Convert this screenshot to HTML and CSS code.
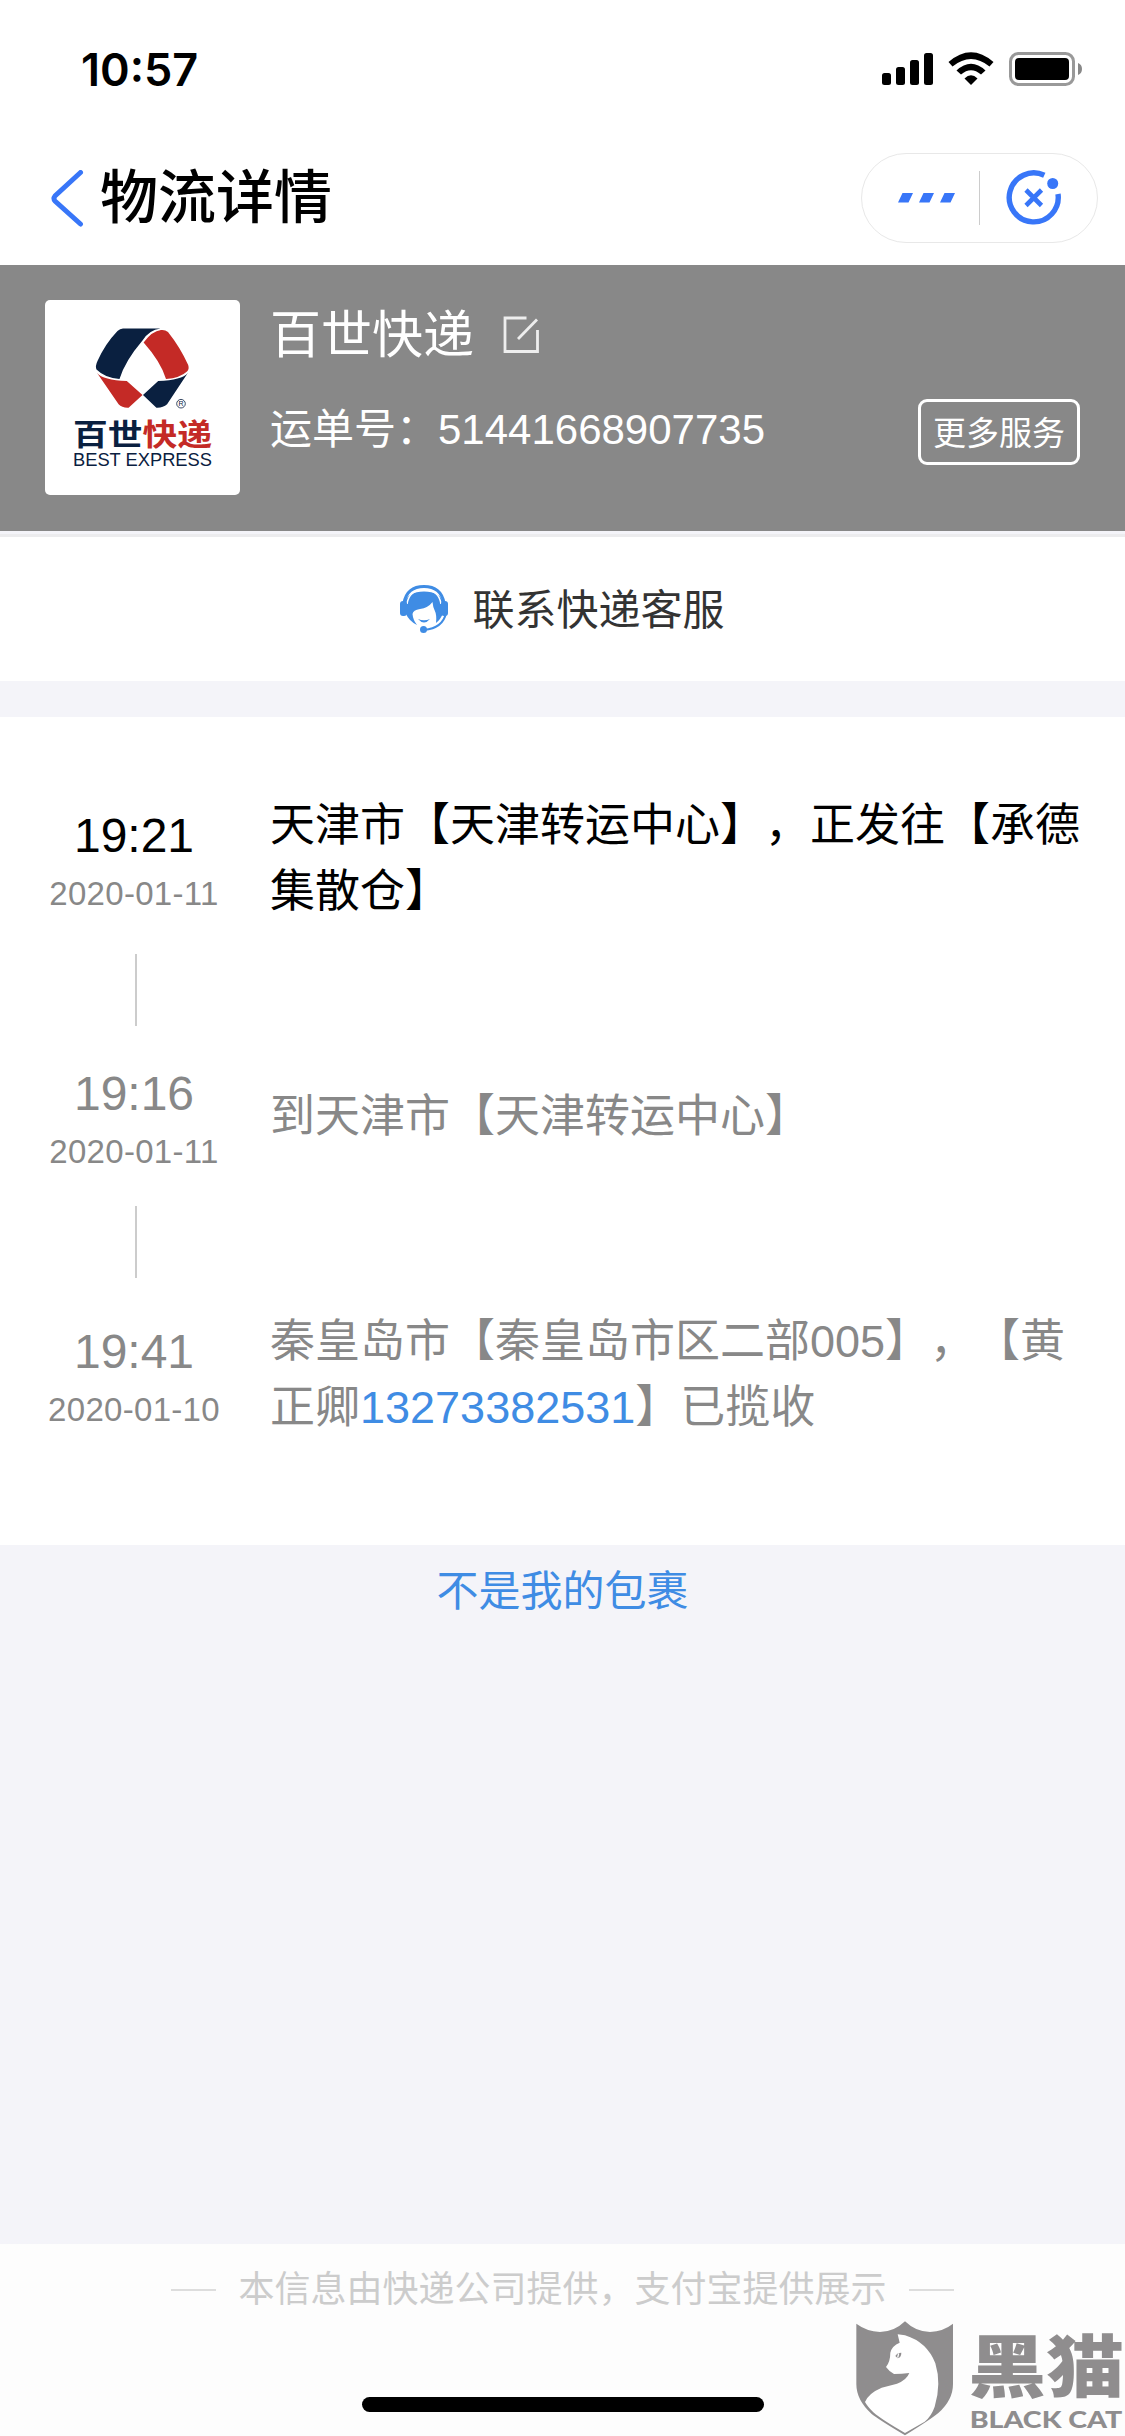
FILE: index.html
```html
<!DOCTYPE html>
<html lang="zh-CN">
<head>
    <meta charset="UTF-8">
    <title>物流详情</title>
    <link rel="stylesheet" href="styles.css">
</head>
<body>
    <!-- 状态栏 -->
    <div class="status-bar">
        <span class="status-time">10:57</span>
        <svg class="status-icons" width="202" height="36" viewBox="0 0 202 36">
            <rect x="1" y="21" width="9" height="12" rx="2.5"/>
            <rect x="15" y="15" width="9" height="18" rx="2.5"/>
            <rect x="29" y="8" width="9" height="25" rx="2.5"/>
            <rect x="43" y="1" width="9" height="32" rx="2.5"/>
            <path d="M67.5 10Q90-9.500 112.500 10L108.500 14.500Q90-.5 71.500 14.500Z"/>
            <path d="M75.500 18.500Q90 5 104.500 18.500L100 22.500Q90 14 80 22.500Z"/>
            <path d="M83.500 26.500Q90 20 96.500 26.500L90 33Z"/>
            <rect x="129.500" y="1.500" width="63" height="31" rx="8" fill="none" stroke="#999" stroke-width="3"/>
            <rect x="134" y="6" width="54" height="22" rx="4"/>
            <path d="M197 11Q201 12.500 201 17Q201 21.500 197 23Z" fill="#888"/>
        </svg>
    </div>

    <!-- 标题栏 -->
    <div class="nav-bar">
        <svg class="back-icon" width="33" height="58" viewBox="0 0 33 58">
            <path d="M29.500 2.500L4 26Q2 28.500 4 31L29.500 54" fill="none" stroke="#3876f8" stroke-width="5" stroke-linecap="round"/>
        </svg>
        <h1 class="nav-title">物流详情</h1>
        <div class="capsule">
            <svg class="more-icon" width="58" height="10" viewBox="0 0 58 10">
                <path d="M4.500 0h10.500l-4.500 9.500H0zM25.500 0h10.500l-4.500 9.500H21zM46.500 0h10.500l-4.500 9.500H42z" fill="#3876f8"/>
            </svg>
            <div class="capsule-line"></div>
            <svg class="close-icon" width="56" height="56" viewBox="0 0 56 56">
                <path d="M38.300 5.300A24.500 24.500 0 1 0 52 24" fill="none" stroke="#3876f8" stroke-width="5.400"/>
                <circle cx="46.700" cy="13.500" r="5.500" fill="#3876f8"/>
                <path d="M20 20l15.500 15.500M35.500 20L20 35.500" stroke="#3876f8" stroke-width="4.600"/>
            </svg>
        </div>
    </div>

    <!-- 快递公司 -->
    <div class="company">
        <svg class="company-logo" width="195" height="195" viewBox="0 0 195 195">
            <path d="M78 28.500H115.500Q104 30 97.500 40.500Q80 61 74.500 79Q60 78 51.500 69.500Q50 66 52.500 61Q60 44 72.500 31Q75 28.500 78 28.500Z" fill="#0a2040"/>
            <path d="M98.600 42.500Q107 31 116 30Q120 29.500 123 32Q135 47 143.200 65Q144.500 69 142 71.500Q135 78 121 79Q116 62 98.600 42.500Z" fill="#c42a26"/>
            <path d="M52.100 73Q58 80 81.800 81L97.500 95L83.600 107.700Q77 108 73.600 104.300Z" fill="#c42a26"/>
            <path d="M142.800 73Q137 80 113.200 81L98 95L111.400 107.700Q118 108 122.100 104.300Z" fill="#0a2040"/>
            <circle cx="136" cy="103.700" r="4.300" fill="none" stroke="#0a2040" stroke-width=".8"/>
            <text class="logo-mark" x="133.600" y="106.400">R</text>
            <text class="logo-cn" x="28" y="145" textLength="139" lengthAdjust="spacingAndGlyphs"><tspan fill="#0a2040">百世</tspan><tspan fill="#c42a26">快递</tspan></text>
            <text class="logo-en" x="28" y="166" textLength="139" lengthAdjust="spacingAndGlyphs">BEST EXPRESS</text>
        </svg>
        <div class="company-info">
            <div class="company-name">
                <span>百世快递</span>
                <svg width="38" height="38" viewBox="0 0 38 38">
                    <path d="M23.500 2H2V35.500H34.500V14" fill="none" stroke="#eee" stroke-width="2.800"/>
                    <path d="M34 3.500L15 23" stroke="#eee" stroke-width="2.800"/>
                </svg>
            </div>
            <div class="waybill">运单号：51441668907735</div>
        </div>
        <button class="btn-more">更多服务</button>
    </div>

    <!-- 客服 -->
    <div class="service">
        <svg width="48" height="48" viewBox="0 0 48 48">
            <path d="M4 18Q7 1.500 24 1.500Q41 1.500 44 18" fill="none" stroke="#3f8ce4" stroke-width="3"/>
            <path d="M5 17Q8 6.500 24 6.500Q40 6.500 43 17V28Q41 34 36 38Q37 30 34.500 25Q33 22 32.500 17Q28 23 20 24Q13 25 12.500 29Q13 35 17 40Q9 36 6 29Z" fill="#3f8ce4"/>
            <path d="M7 19Q9 5 24 4.500Q39 5 41 19" fill="none" stroke="#fff" stroke-width="1.600"/>
            <rect x="0" y="16" width="7" height="15" rx="3" fill="#3f8ce4"/>
            <rect x="41" y="16" width="7" height="15" rx="3" fill="#3f8ce4"/>
            <path d="M18 34Q24 36.500 30 34Q24 41 18 34Z" fill="#3f8ce4"/>
            <path d="M46 28Q43 43 24 45" fill="none" stroke="#3f8ce4" stroke-width="2"/>
            <circle cx="23.500" cy="44.500" r="3.500" fill="#3f8ce4"/>
        </svg>
        <span class="service-text">联系快递客服</span>
    </div>

    <!-- 物流轨迹 -->
    <div class="track-list">
        <div class="track-item active">
            <div class="track-date">
                <div class="time">19:21</div>
                <div class="date">2020-01-11</div>
            </div>
            <div class="track-text">天津市【天津转运中心】，正发往【承德集散仓】</div>
        </div>
        <div class="track-line"></div>
        <div class="track-item">
            <div class="track-date">
                <div class="time">19:16</div>
                <div class="date">2020-01-11</div>
            </div>
            <div class="track-text">到天津市【天津转运中心】</div>
        </div>
        <div class="track-line second"></div>
        <div class="track-item">
            <div class="track-date">
                <div class="time">19:41</div>
                <div class="date">2020-01-10</div>
            </div>
            <div class="track-text">
                <div>秦皇岛市【秦皇岛市区二部005】，【黄</div>
                <div class="track-row"><span>正卿</span><a class="phone">13273382531</a><span>】已揽收</span></div>
            </div>
        </div>
    </div>

    <a class="not-mine">不是我的包裹</a>

    <div class="footer">
        <div class="footer-text">本信息由快递公司提供，支付宝提供展示</div>
        <div class="home-bar"></div>
    </div>

    <!-- 右下角水印 -->
    <svg class="watermark" width="270" height="116" viewBox="90 90 810 348">
        <path d="M94 101Q125 124 165 126Q207 126 240 94Q273 126 315 126Q355 124 384 101V282Q384 330 340 369Q320 386 240 436Q160 388 140 372Q94 330 94 282Z" fill="#8f8d8e"/>
        <path d="M218 133L240 136Q306 156 331 220Q350 282 329 350Q319 379 299 395L240 429Q170 389 145 367Q127 349 120 336Q130 310 170 293L216 281Q245 270 253 249Q230 252 207 252Q193 245 183 231Q196 214 196 188Q201 167 224 158Z" fill="#fff"/>
        <path d="M211 198Q216 188 229 188Q229 202 218 205Z" fill="#8f8d8e"/>
        <path d="M221 190L218 203" stroke="#fff" stroke-width="4"/>
        <text class="mark-cn" x="430" y="305" textLength="468" lengthAdjust="spacingAndGlyphs">黑猫</text>
        <text class="mark-en" x="434" y="415" textLength="458" lengthAdjust="spacingAndGlyphs">BLACK CAT</text>
    </svg>
</body>
</html>
```
FILE: styles.css
```css
body {
    font-family: "Liberation Sans", "Noto Sans CJK SC", sans-serif;
    margin: 0;
    width: 1125px;
    height: 2436px;
    background-color: #f4f4f9;
    display: flex;
    flex-direction: column;
    position: relative;
    overflow: hidden;
    text-spacing-trim: space-all;
}

/* 状态栏 */
.status-bar {
    height: 132px;
    background-color: #fff;
    display: flex;
    justify-content: space-between;
    align-items: flex-start;
    padding: 0 42px 0 81px;
    box-sizing: border-box;
}

.status-time {
    font-family: Inter, sans-serif;
    font-size: 45px;
    font-weight: 600;
    line-height: 54px;
    margin-top: 43px;
}

.status-icons {
    margin-top: 52px;
}

/* 标题栏 */
.nav-bar {
    height: 133px;
    background-color: #fff;
    display: flex;
    align-items: center;
    padding: 0 27px 0 51px;
    box-sizing: border-box;
}

.nav-title {
    flex: 1;
    margin: 0 0 2px 16px;
    font-size: 58px;
    font-weight: 500;
    line-height: 80px;
}

.capsule {
    width: 237px;
    height: 90px;
    margin-bottom: 2px;
    border: 1px solid #e8e8e8;
    border-radius: 45px;
    box-sizing: border-box;
    display: flex;
    align-items: center;
}

.more-icon {
    margin-left: 36px;
}

.capsule-line {
    width: 1px;
    height: 54px;
    background-color: #ccc;
    margin: 0 26px 0 23px;
}

/* 快递公司 */
.company {
    height: 266px;
    background-color: #888;
    color: #fff;
    display: flex;
    align-items: flex-start;
    padding: 35px 45px 0;
    box-sizing: border-box;
}

.company-logo {
    background-color: #fff;
    border-radius: 5px;
}

.logo-mark {
    font-size: 7px;
    fill: #0a2040;
}

.logo-cn {
    font-size: 30px;
    font-weight: bold;
}

.logo-en {
    font-size: 17.5px;
    fill: #0a2040;
}

.company-info {
    flex: 1;
    margin-left: 30px;
}

.company-name {
    display: flex;
    align-items: center;
    gap: 29px;
    font-size: 51px;
    line-height: 66px;
}

.company-name span {
    padding-top: 3px;
}

.waybill {
    font-size: 42px;
    line-height: 60px;
    margin-top: 31px;
}

.btn-more {
    width: 162px;
    height: 66px;
    margin-top: 99px;
    padding: 0 0 2px;
    border: 3px solid #fff;
    border-radius: 9px;
    background: none;
    color: #fff;
    font-family: inherit;
    font-size: 33px;
}

/* 客服 */
.service {
    height: 144px;
    background-color: #fff;
    border-top: 3px solid #ececee;
    margin-top: 3px;
    display: flex;
    justify-content: center;
    align-items: center;
    gap: 24px;
    font-size: 42px;
    color: #333;
}

.service-text {
    padding-bottom: 5px;
}

/* 物流轨迹 */
.track-list {
    height: 828px;
    margin-top: 36px;
    padding: 76px 45px 0;
    background-color: #fff;
    box-sizing: border-box;
    color: #888;
}

.track-item {
    height: 132px;
    display: flex;
    align-items: center;
}

.track-item.active .time,
.track-item.active .track-text {
    color: #000;
}

.track-date {
    width: 178px;
    margin-right: 47px;
    padding-top: 2px;
    text-align: center;
}

.time {
    font-size: 48px;
    line-height: 60px;
}

.date {
    font-size: 33px;
    line-height: 40px;
    margin-top: 8px;
    letter-spacing: 0.3px;
}

.track-text {
    width: 810px;
    font-size: 45px;
    line-height: 66px;
}

.track-row {
    display: flex;
}

.track-line {
    width: 2px;
    height: 72px;
    margin: 29px 0 25px 90px;
    background-color: #ccc;
}

.track-line.second {
    margin: 23px 0 31px 90px;
}

.phone,
.not-mine {
    color: #3f8ce4;
}

.not-mine {
    text-align: center;
    font-size: 42px;
    line-height: 60px;
    margin-top: 17px;
}

/* 底部 */
.footer {
    height: 192px;
    margin-top: auto;
    background-color: #fdfdfd;
    display: flex;
    flex-direction: column;
    align-items: center;
    justify-content: space-between;
    padding: 19px 0 24px;
    box-sizing: border-box;
}

.footer-text {
    display: flex;
    align-items: center;
    gap: 22px;
    font-size: 36px;
    line-height: 54px;
    color: #ccc;
}

.footer-text::before,
.footer-text::after {
    content: "";
    width: 45px;
    height: 2px;
    background-color: #ddd;
}

.home-bar {
    width: 402px;
    height: 15px;
    border-radius: 8px;
    background-color: #000;
}

/* 水印 */
.watermark {
    position: absolute;
    right: 0;
    bottom: 0;
}

.mark-cn {
    font-size: 204px;
    font-weight: 900;
    fill: #8f8d8e;
}

.mark-en {
    font-family: Lato, sans-serif;
    font-size: 69px;
    font-weight: 900;
    fill: #8f8d8e;
}
```
